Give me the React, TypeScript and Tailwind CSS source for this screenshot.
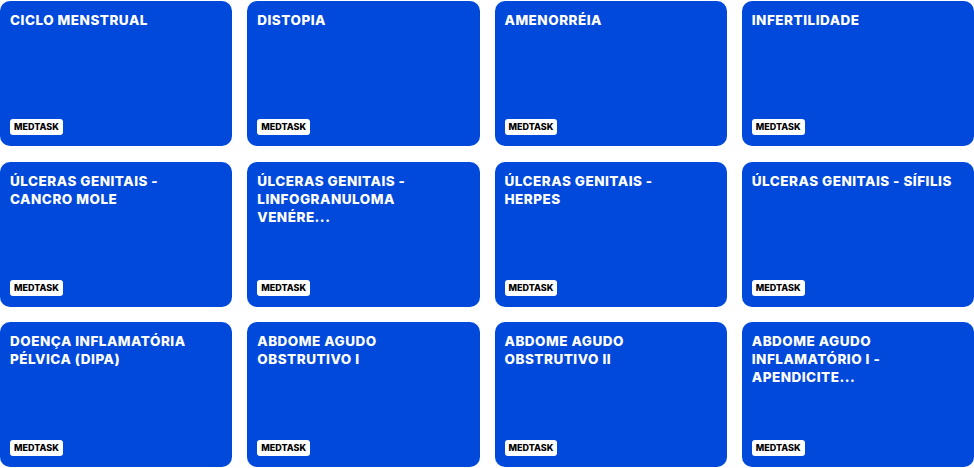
import React from 'react';

const topics: string[] = [
  'CICLO MENSTRUAL',
  'DISTOPIA',
  'AMENORRÉIA',
  'INFERTILIDADE',
  'ÚLCERAS GENITAIS - CANCRO MOLE',
  'ÚLCERAS GENITAIS - LINFOGRANULOMA VENÉRE...',
  'ÚLCERAS GENITAIS - HERPES',
  'ÚLCERAS GENITAIS - SÍFILIS',
  'DOENÇA INFLAMATÓRIA PÉLVICA (DIPA)',
  'ABDOME AGUDO OBSTRUTIVO I',
  'ABDOME AGUDO OBSTRUTIVO II',
  'ABDOME AGUDO INFLAMATÓRIO I - APENDICITE...',
];

const Card: React.FC<{ title: string }> = ({ title }) => (
  <div className="h-[145px] bg-[#0049db] rounded-[10px] px-[10px] pt-[10px] pb-[11px] flex flex-col justify-between">
    <h3 className="text-white font-extrabold text-[13.5px] leading-[18px] tracking-[0.5px] pr-[6px]">{title}</h3>
    <span className="self-start bg-white text-black font-extrabold text-[9px] leading-[16px] px-[4px] rounded-[3px]">
      MEDTASK
    </span>
  </div>
);

const App: React.FC = () => {
  return (
    <div className="w-[974px] h-[468px] bg-white pt-[1px] overflow-hidden" style={{ fontFamily: 'Inter, "Open Sans", sans-serif' }}>
      <div className="grid grid-cols-4 gap-x-[15px] gap-y-[15.5px]">
        {topics.map((t) => (
          <Card key={t} title={t} />
        ))}
      </div>
    </div>
  );
};

export default App;
